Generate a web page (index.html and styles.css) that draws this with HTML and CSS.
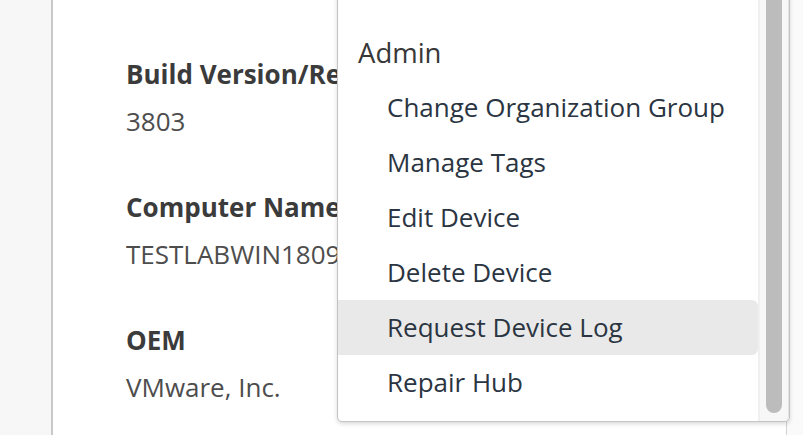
FILE: index.html
```html
<!DOCTYPE html>
<html lang="en">
  <head>
    <meta charset="UTF-8" />
    <title>Device Details</title>
    <link rel="stylesheet" href="styles.css">
  </head>
  <body>
    <div class="page">
      <aside class="rail"></aside>

      <main class="panel">
        <div class="details">
          <div class="field">
            <p class="label">Build Version/Revision</p>
            <p class="value">3803</p>
          </div>
          <div class="field">
            <p class="label">Computer Name</p>
            <p class="value">TESTLABWIN1809</p>
          </div>
          <div class="field">
            <p class="label">OEM</p>
            <p class="value">VMware, Inc.</p>
          </div>
        </div>

        <!-- actions dropdown, open -->
        <div class="menu">
          <ul class="menu-list">
            <li class="menu-header">Admin</li>
            <li class="menu-item">Change Organization Group</li>
            <li class="menu-item">Manage Tags</li>
            <li class="menu-item">Edit Device</li>
            <li class="menu-item">Delete Device</li>
            <li class="menu-item is-hover">Request Device Log</li>
            <li class="menu-item">Repair Hub</li>
          </ul>
          <div class="scroll-track">
            <div class="scroll-thumb"></div>
          </div>
        </div>
      </main>
    </div>
  </body>
</html>
```

FILE: styles.css
```css
body {
  margin: 0;
  padding: 0;
  font-family: "Open Sans", "Noto Sans", sans-serif;
  background-color: #fafafa;
  overflow: hidden;
}

.page {
  display: flex;
  width: 803px;
  height: 435px;
}

.rail {
  width: 51px;
  flex: 0 0 51px;
  background-color: #f7f7f7;
  border-right: 2px solid #c9c9c9;
}

.panel {
  position: relative;
  width: 733px;
  flex: 0 0 733px;
  background: white;
  border-right: 1px solid #d2d2d2;
}

.details {
  padding: 56px 0 0 73px;
}

.field {
  margin-bottom: 50px;
}

.label {
  margin: 0;
  font-size: 26px;
  line-height: 36px;
  font-weight: bold;
  color: #3b3b3b;
  white-space: nowrap;
}

.value {
  margin: 11px 0 0 0;
  font-size: 26px;
  line-height: 36px;
  color: #4d4d4d;
  white-space: nowrap;
}

/* dropdown */
.menu {
  position: absolute;
  top: -20px;
  left: 284px;
  width: 451px;
  height: 440px;
  display: flex;
  background: white;
  border: 1px solid #c4c4c4;
  border-radius: 0 0 5px 5px;
  box-shadow: 0 2px 4px rgba(0, 0, 0, 0.15);
}

.menu-list {
  list-style: none;
  margin: 0;
  padding: 44px 0 0 0;
  width: 420px;
  flex: 0 0 420px;
}

.menu-header {
  padding-left: 20px;
  font-size: 27.5px;
  line-height: 55px;
  color: #383838;
}

.menu-item {
  padding-left: 49px;
  font-size: 26px;
  line-height: 55px;
  color: #2b3542;
  border-radius: 0 6px 6px 0;
}

.menu-item.is-hover {
  background-color: #e9e9e9;
}

.scroll-track {
  flex: 1;
  position: relative;
  background-color: #f7f7f7;
  border-left: 2px solid #f0f0f0;
  border-right: 1px solid #e2e2e2;
  border-radius: 0 0 5px 0;
}

.scroll-thumb {
  position: absolute;
  top: 0;
  left: 6px;
  width: 16px;
  height: 432px;
  background-color: #bcbcbc;
  border-radius: 8px;
}
```
